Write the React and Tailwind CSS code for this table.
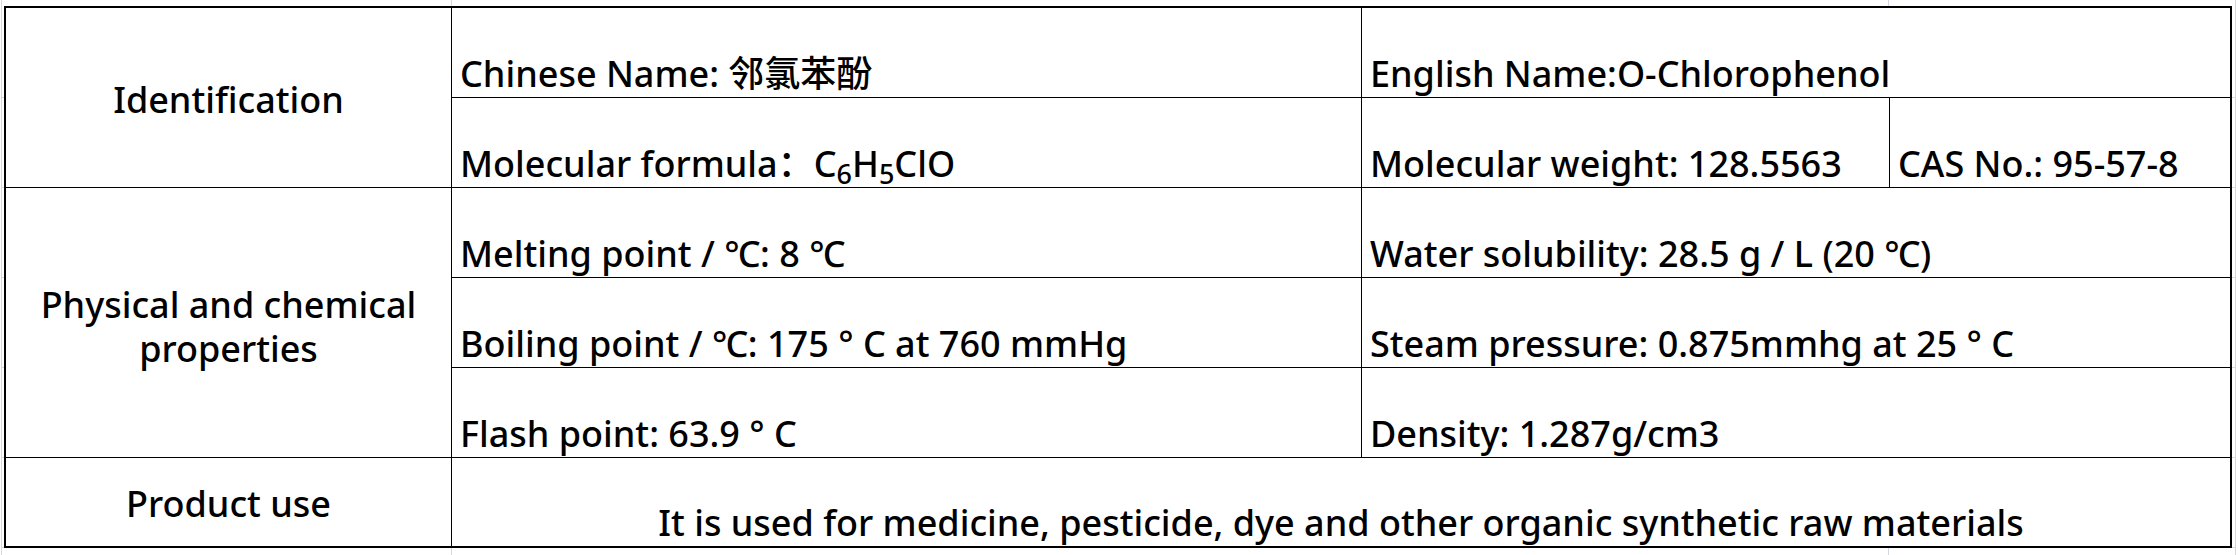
import React from 'react';

const rows = [0, 1, 2, 3, 4, 5];

function SideStrip({ side }) {
  return (
    <div className={side === 'left' ? 'w-[4px] flex flex-col pl-px' : 'w-[6px] flex flex-col'}>
      <div className={side === 'left' ? 'h-[2px] border-l border-[#d3d8e2]' : 'h-[2px] w-[4px] border-r border-[#d3d8e2]'} />
      {rows.map((r) => (
        <div
          key={r}
          className={
            side === 'left'
              ? 'h-[90px] border-l border-b border-[#d3d8e2]'
              : 'h-[90px] w-[4px] border-r border-b border-[#d3d8e2]'
          }
        />
      ))}
    </div>
  );
}

function EdgeStrip({ height }) {
  return (
    <div className={`flex ${height}`}>
      <div className="w-[2px] border-r border-[#d3d8e2]" />
      <div className="w-[450px] border-r border-[#d3d8e2]" />
      <div className="w-[1437px] border-r border-[#d3d8e2]" />
      <div className="w-[347px] border-r border-[#d3d8e2]" />
    </div>
  );
}

const cell = 'border-r border-b border-black flex items-end pl-[8px] pb-[5px] leading-none whitespace-nowrap';

export default function App() {
  return (
    <div className="w-[2238px] h-[555px] bg-white text-black text-[36px] font-medium font-['Noto_Sans','Noto_Sans_CJK_SC',sans-serif] overflow-hidden">
      <EdgeStrip height="h-[6px]" />
      <div className="flex">
        <SideStrip side="left" />
        <div className="grid grid-cols-[446px_910px_528px_342px] grid-rows-[90px_90px_90px_90px_90px_90px] border-l-2 border-t-2 border-black">
          <div className="row-span-2 border-r border-b border-black flex items-center justify-center leading-none pt-[4px]">
            Identification
          </div>
          <div className={cell}>Chinese Name: 邻氯苯酚</div>
          <div className={`${cell} col-span-2 border-r-2`}>English Name:O-Chlorophenol</div>

          <div className={cell}>
            <span>
              Molecular formula：C<sub>6</sub>H<sub>5</sub>ClO
            </span>
          </div>
          <div className={cell}>Molecular weight: 128.5563</div>
          <div className={`${cell} border-r-2`}>CAS No.: 95-57-8</div>

          <div className="row-span-3 border-r border-b border-black flex flex-col items-center justify-center gap-[8px] leading-none pt-[8px]">
            <div>Physical and chemical</div>
            <div>properties</div>
          </div>
          <div className={cell}>Melting point / ℃: 8 ℃</div>
          <div className={`${cell} col-span-2 border-r-2`}>Water solubility: 28.5 g / L (20 ℃)</div>

          <div className={cell}>Boiling point / ℃: 175 ° C at 760 mmHg</div>
          <div className={`${cell} col-span-2 border-r-2`}>Steam pressure: 0.875mmhg at 25 ° C</div>

          <div className={cell}>Flash point: 63.9 ° C</div>
          <div className={`${cell} col-span-2 border-r-2`}>Density: 1.287g/cm3</div>

          <div className="border-r border-b-2 border-black flex items-center justify-center leading-none pt-[4px]">
            Product use
          </div>
          <div className="col-span-3 border-r-2 border-b-2 border-black flex items-end justify-center pb-[5px] leading-none whitespace-nowrap">
            It is used for medicine, pesticide, dye and other organic synthetic raw materials
          </div>
        </div>
        <SideStrip side="right" />
      </div>
      <EdgeStrip height="h-[7px]" />
    </div>
  );
}
